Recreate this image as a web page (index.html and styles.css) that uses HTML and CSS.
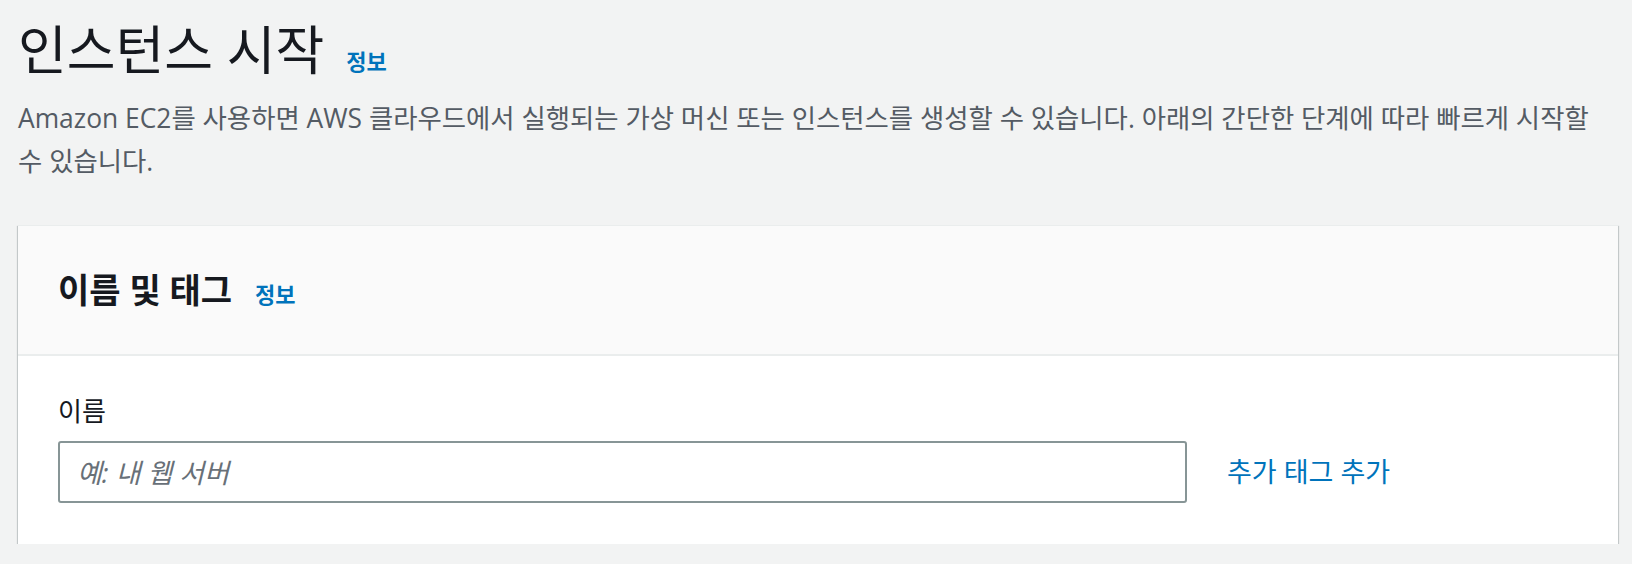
FILE: index.html
```html
<!DOCTYPE html>
<html lang="ko">
<head>
<meta charset="utf-8">
<title>인스턴스 시작</title>
<link rel="stylesheet" href="styles.css">
</head>
<body>
<main class="page">
  <header class="page-head">
    <h1 class="page-title">인스턴스 시작<a class="info-link info-lg" href="#">정보</a></h1>
    <p class="page-desc">Amazon EC2를 사용하면 AWS 클라우드에서 실행되는 가상 머신 또는 인스턴스를 생성할 수 있습니다. 아래의 간단한 단계에 따라 빠르게 시작할 수 있습니다.</p>
  </header>
  <section class="card">
    <div class="card-head">
      <h2 class="card-title">이름 및 태그<a class="info-link info-md" href="#">정보</a></h2>
    </div>
    <div class="card-body">
      <label class="field-label" for="name">이름</label>
      <div class="field-row">
        <input class="text-input" id="name" type="text" placeholder="예: 내 웹 서버">
        <a class="add-link" href="#">추가 태그 추가</a>
      </div>
    </div>
  </section>
</main>
</body>
</html>
```

FILE: styles.css
```css
* { box-sizing: border-box; }
html, body {
  margin: 0;
  padding: 0;
  background: #f2f3f3;
}
body {
  font-family: "Open Sans", "Noto Sans CJK KR", sans-serif;
  color: #16191f;
}
.page {
  padding: 20px 14px 0 18px;
}
.page-title {
  margin: 0;
  font-size: 53px;
  line-height: 60px;
  font-weight: 400;
  color: #16191f;
}
.info-link {
  color: #0073bb;
  text-decoration: none;
  font-weight: 700;
  line-height: 1;
  vertical-align: baseline;
}
.info-lg {
  font-size: 22px;
  margin-left: 22px;
}
.info-md {
  font-size: 22px;
  margin-left: 23px;
}
.page-desc {
  margin: 17px 0 0 0;
  max-width: 1578px;
  font-size: 26.4px;
  line-height: 43px;
  color: #545b64;
}
.card {
  margin-top: 42px;
  width: 1600px;
  background: #ffffff;
  border-top: 1px solid #eaeded;
  box-shadow: 0 1px 1px 0 rgba(0, 28, 36, 0.3), 1px 1px 1px 0 rgba(0, 28, 36, 0.15), -1px 1px 1px 0 rgba(0, 28, 36, 0.15);
}
.card-head {
  background: #fafafa;
  border-bottom: 2px solid #eaeded;
  height: 130px;
  padding: 0 40px;
  display: flex;
  align-items: center;
}
.card-title {
  margin: 0;
  font-size: 34px;
  line-height: 40px;
  font-weight: 700;
  color: #16191f;
}
.card-body {
  padding: 39px 40px 41px 40px;
}
.field-label {
  display: block;
  font-size: 26px;
  line-height: 32px;
  color: #16191f;
}
.field-row {
  margin-top: 14px;
  display: flex;
  align-items: center;
  gap: 40px;
}
.text-input {
  width: 1129px;
  height: 62px;
  border: 2px solid #879596;
  border-radius: 3px;
  background: #ffffff;
  padding: 0 17px;
  font-family: "Open Sans", "Noto Sans CJK KR", sans-serif;
  font-size: 27px;
  color: #16191f;
  outline: none;
}
.text-input::placeholder {
  color: #687078;
  font-style: italic;
  opacity: 1;
}
.add-link {
  color: #0073bb;
  text-decoration: none;
  font-size: 27px;
  line-height: 32px;
}
```
